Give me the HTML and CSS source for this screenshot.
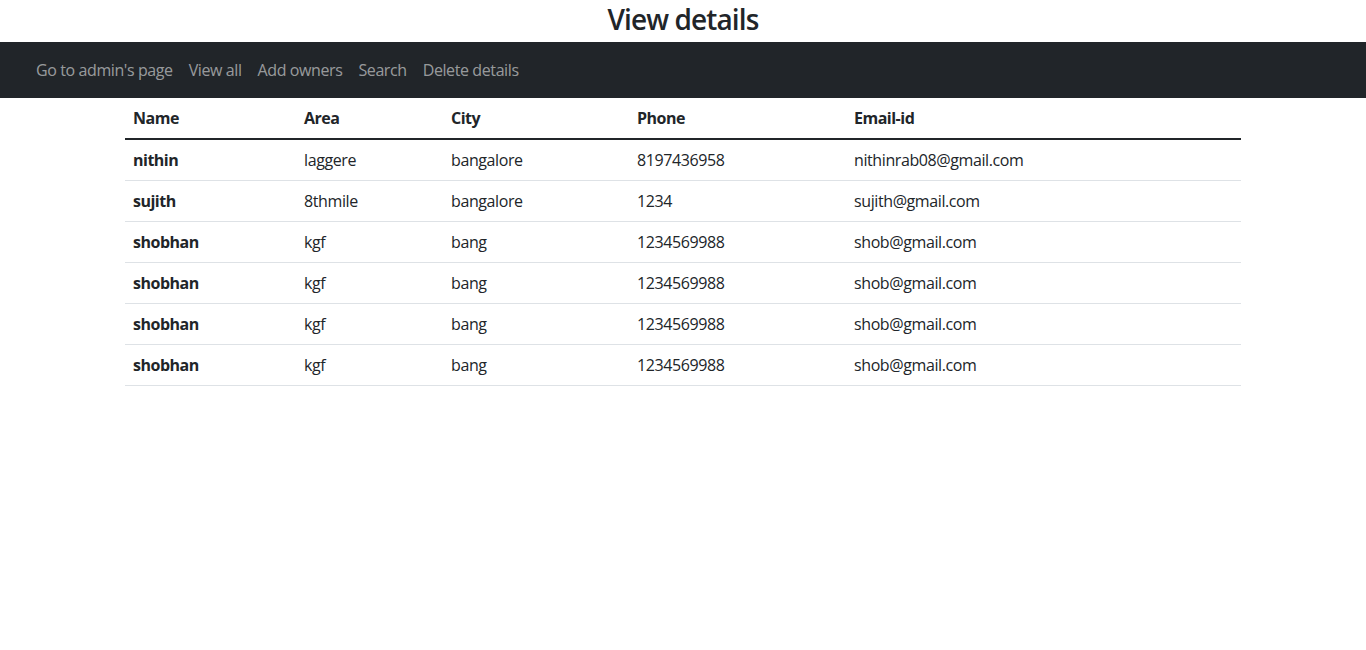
FILE: index.html
```html
<!DOCTYPE html>
<html lang="en">
<head>
<meta charset="utf-8">
<title>View details</title>
<link rel="stylesheet" href="styles.css">
</head>
<body>
<h3 class="page-title">View details</h3>
<nav class="navbar">
  <ul class="nav-list">
    <li><a class="nav-link" href="#">Go to admin's page</a></li>
    <li><a class="nav-link" href="#">View all</a></li>
    <li><a class="nav-link" href="#">Add owners</a></li>
    <li><a class="nav-link" href="#">Search</a></li>
    <li><a class="nav-link" href="#">Delete details</a></li>
  </ul>
</nav>
<div class="container">
  <table class="table">
    <colgroup>
      <col class="col-name">
      <col class="col-area">
      <col class="col-city">
      <col class="col-phone">
      <col class="col-email">
    </colgroup>
    <thead>
      <tr><th>Name</th><th>Area</th><th>City</th><th>Phone</th><th>Email-id</th></tr>
    </thead>
    <tbody>
      <tr><th>nithin</th><td>laggere</td><td>bangalore</td><td>8197436958</td><td>nithinrab08@gmail.com</td></tr>
      <tr><th>sujith</th><td>8thmile</td><td>bangalore</td><td>1234</td><td>sujith@gmail.com</td></tr>
      <tr><th>shobhan</th><td>kgf</td><td>bang</td><td>1234569988</td><td>shob@gmail.com</td></tr>
      <tr><th>shobhan</th><td>kgf</td><td>bang</td><td>1234569988</td><td>shob@gmail.com</td></tr>
      <tr><th>shobhan</th><td>kgf</td><td>bang</td><td>1234569988</td><td>shob@gmail.com</td></tr>
      <tr><th>shobhan</th><td>kgf</td><td>bang</td><td>1234569988</td><td>shob@gmail.com</td></tr>
    </tbody>
  </table>
</div>
</body>
</html>
```
FILE: styles.css
```css
* { box-sizing: border-box; }
html, body { margin: 0; padding: 0; }
body {
  font-family: "Open Sans", "Noto Sans", sans-serif;
  font-size: 16px;
  line-height: 1.5;
  letter-spacing: -0.4px;
  color: #212529;
  background: #fff;
}
.page-title {
  margin: 0 0 4px;
  font-size: 28px;
  font-weight: 600;
  line-height: 38px;
  letter-spacing: -0.9px;
  text-align: center;
}
.navbar {
  background: #212529;
  padding: 8px 12px 8px 28px;
  display: flex;
  align-items: center;
}
.nav-list {
  list-style: none;
  margin: 0;
  padding: 0;
  display: flex;
}
.nav-link {
  display: block;
  padding: 8px 8px;
  color: rgba(255, 255, 255, 0.55);
  text-decoration: none;
}
.container {
  width: 1140px;
  padding: 0 12px;
  margin: 0 auto;
}
.table {
  width: 100%;
  border-collapse: collapse;
  table-layout: fixed;
}
.col-name { width: 171px; }
.col-area { width: 147px; }
.col-city { width: 186px; }
.col-phone { width: 217px; }
.col-email { width: auto; }
.table th, .table td {
  padding: 8px;
  text-align: left;
  vertical-align: top;
  font-weight: 400;
  border-bottom: 1px solid #dee2e6;
}
.table th { font-weight: 700; letter-spacing: -0.5px; }
.table thead th { border-bottom: 2px solid #212529; }
```
